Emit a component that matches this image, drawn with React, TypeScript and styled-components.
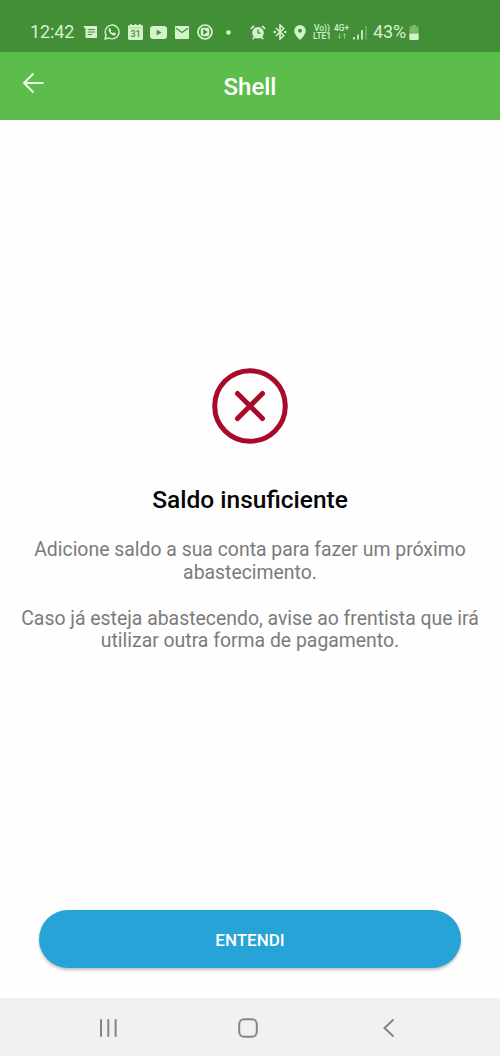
import React from "react";
import styled, { createGlobalStyle } from "styled-components";

const GlobalStyle = createGlobalStyle`
  * { box-sizing: border-box; }
  body { margin: 0; background: #fefefe; font-family: Roboto, "Liberation Sans", sans-serif; }
  svg { display: block; flex: none; }
`;

const tint = "#d3f3cb";
const statusGreen = "#438f38";

const Screen = styled.div`
  display: flex;
  flex-direction: column;
  width: 500px;
  height: 1056px;
  background: #fefefe;
`;

const StatusBar = styled.div`
  display: flex;
  align-items: center;
  height: 52px;
  padding: 12px 0 0 30px;
  background: ${statusGreen};
  color: ${tint};
`;

const StatusText = styled.span<{ $width: number; $gap?: number }>`
  width: ${(p) => p.$width}px;
  margin-left: ${(p) => p.$gap ?? 0}px;
  font-size: 18px;
  letter-spacing: -0.1px;
  line-height: 20px;
  white-space: nowrap;
`;

const StatusIcon = styled.svg.attrs({ fill: "none" })<{ $gap: number }>`
  margin-left: ${(p) => p.$gap}px;
`;

const NetworkLabel = styled.div<{ $width: number; $gap: number }>`
  display: flex;
  flex-direction: column;
  align-items: center;
  width: ${(p) => p.$width}px;
  margin-left: ${(p) => p.$gap}px;
  font-size: 8.4px;
  font-weight: 500;
  line-height: 8px;
  white-space: nowrap;
`;

const Header = styled.header`
  display: grid;
  grid-template-columns: 66px 1fr 66px;
  height: 68px;
  background: #5dbd4c;
  border-bottom: 1px solid #65b557;
`;

const BackButton = styled.button`
  display: flex;
  justify-content: center;
  padding: 20px 0 0;
  border: 0;
  background: none;
`;

const Title = styled.h1`
  margin: 0;
  padding-top: 21px;
  color: #fff;
  font-size: 24px;
  font-weight: 500;
  line-height: 28px;
  text-align: center;
`;

const Content = styled.main`
  display: flex;
  flex: 1;
  flex-direction: column;
  align-items: center;
  padding-top: 248px;
`;

const Heading = styled.h2`
  margin: 41px 0 24px;
  color: #050505;
  font-size: 24.5px;
  font-weight: 500;
  line-height: 30px;
`;

const Message = styled.p`
  margin: 0 0 23px;
  color: #7b7b7b;
  font-size: 19.4px;
  line-height: 22.8px;
  text-align: center;
  white-space: nowrap;
`;

const ActionButton = styled.button`
  width: 422px;
  height: 58px;
  margin: auto 0 30px;
  padding: 2px 0 0;
  border: 0;
  border-radius: 29px;
  background: #26a4d7;
  box-shadow: 0 2px 3px rgba(0, 0, 0, 0.25);
  color: #fff;
  font-family: inherit;
  font-size: 17px;
  font-weight: 500;
`;

const NavBar = styled.nav`
  display: flex;
  align-items: center;
  justify-content: space-between;
  height: 58px;
  padding: 2px 102px 0 98px;
  background: #f1f1f1;
`;

export default function App() {
  return (
    <Screen>
      <GlobalStyle />
      <StatusBar>
        <StatusText $width={44}>12:42</StatusText>
        <StatusIcon $gap={9} width="15" height="14" viewBox="0 0 15 14">
          <path d="M0 1H13A1 1 0 0 1 14 2V12A1 1 0 0 1 13 13H3.500A1 1 0 0 1 2.500 12V4Z" fill={tint} />
          <path d="M4.800 4.500H12M4.800 7H12M4.800 9.500H9" stroke={statusGreen} strokeWidth="1.200" />
        </StatusIcon>
        <StatusIcon $gap={6} width="16" height="16" viewBox="0 0 16 16">
          <path d="M1 15l1-3.900A6.900 6.900 0 1 1 4.800 14Z" stroke={tint} strokeWidth="1.400" strokeLinejoin="round" />
          <path d="M5.300 4.200c-1.500 1.200-.7 3.300 1.100 5.200 1.900 1.900 4.200 2.800 5.400 1.100.4-.7.2-1.100-.2-1.300L10 8.400c-.5-.2-.7.5-1.200.9C7.600 8.900 6.900 8.200 6.500 7.100c.5-.4.8-.7.6-1.200L6.400 4.300c-.2-.4-.7-.4-1.100-.1Z" fill={tint} />
        </StatusIcon>
        <StatusIcon $gap={8} width="15" height="16" viewBox="0 0 15 16">
          <path d="M1.500 1H2.500V0H4V1H6.800V0H8.300V1H11V0H12.500V1H13.500A1.500 1.500 0 0 1 15 2.500V14.500A1.500 1.500 0 0 1 13.500 16H1.500A1.500 1.500 0 0 1 0 14.500V2.500A1.500 1.500 0 0 1 1.500 1Z" fill={tint} />
          <path d="M1.500 4H13.500" stroke={statusGreen} strokeWidth=".7" opacity=".4" />
          <text x="7.500" y="13" textAnchor="middle" fontFamily="Roboto" fontSize="9" fontWeight="500" fill={statusGreen}>31</text>
        </StatusIcon>
        <StatusIcon $gap={7} width="17" height="13" viewBox="0 0 17 13">
          <rect width="17" height="13" rx="3" fill={tint} />
          <path d="M6.700 3.800L11.500 6.500L6.700 9.200Z" fill={statusGreen} />
        </StatusIcon>
        <StatusIcon $gap={8} width="14" height="13" viewBox="0 0 14 13">
          <rect width="14" height="13" rx="1" fill={tint} />
          <path d="M1 2.300L7 6.500L13 2.300" stroke={statusGreen} strokeWidth="1.200" />
        </StatusIcon>
        <StatusIcon $gap={8} width="16" height="16" viewBox="0 0 16 16">
          <circle cx="8" cy="8" r="7" stroke={tint} strokeWidth="1.700" />
          <rect x="3.700" y="3.700" width="8.600" height="8.600" rx="2" fill={tint} />
          <path d="M6.300 5L10.800 8L6.300 11Z" fill={statusGreen} />
        </StatusIcon>
        <StatusIcon $gap={13} width="5" height="5" viewBox="0 0 5 5">
          <circle cx="2.500" cy="2.500" r="2.300" fill={tint} />
        </StatusIcon>
        <StatusIcon $gap={19} width="16" height="15" viewBox="0 0 16 15">
          <circle cx="8" cy="7.800" r="5.800" fill={tint} />
          <path d="M.8 3.800L4 .9M15.200 3.800L12 .9M4.500 12L2.800 14.300M11.500 12L13.200 14.300" stroke={tint} strokeWidth="1.600" />
          <path d="M8 4.500V8.200H10.700" stroke={statusGreen} strokeWidth="1.300" />
        </StatusIcon>
        <StatusIcon $gap={7} width="14" height="16" viewBox="0 0 14 16">
          <path d="M3 4L10.700 11.500L7 15V1L10.700 4.500L3 12" stroke={tint} strokeWidth="1.600" />
          <path d="M.6 8H3M11 8H13.400" stroke={tint} strokeWidth="1.900" />
        </StatusIcon>
        <StatusIcon $gap={7} width="12" height="15" viewBox="0 0 12 15">
          <path fillRule="evenodd" d="M6 0A5.700 5.700 0 0 0 .3 5.700C.3 9 3.500 12.500 6 15C8.500 12.500 11.700 9 11.700 5.700A5.700 5.700 0 0 0 6 0ZM6 3.700A2 2 0 1 1 6 7.700A2 2 0 1 1 6 3.700Z" fill={tint} />
        </StatusIcon>
        <NetworkLabel $width={18} $gap={7}>
          <span>Vo))</span>
          <span>LTE1</span>
        </NetworkLabel>
        <NetworkLabel $width={15} $gap={3}>
          <span>4G+</span>
          <svg width="10" height="8" viewBox="0 0 10 8" fill="none" stroke={tint} opacity=".5">
            <path d="M2.500 1V6.500M.7 4.700L2.500 6.500L4.300 4.700M7.500 7V1.500M5.700 3.300L7.500 1.500L9.300 3.300" />
          </svg>
        </NetworkLabel>
        <StatusIcon $gap={4} width="14" height="15" viewBox="0 0 14 15">
          <path d="M1 12V14.500M5 9.500V14.500M9 5V14.500" stroke={tint} strokeWidth="1.700" />
          <path d="M13 1V14.500" stroke={tint} strokeWidth="1.300" opacity=".4" />
        </StatusIcon>
        <StatusText $width={33} $gap={6}>43%</StatusText>
        <StatusIcon $gap={3} width="10" height="15" viewBox="0 0 10 15">
          <path d="M3 0H7V1.500H9.500V8.500H.5V1.500H3Z" fill={tint} opacity=".4" />
          <path d="M.3 8.500H9.700V14A1 1 0 0 1 8.700 15H1.300A1 1 0 0 1 .3 14Z" fill={tint} />
        </StatusIcon>
      </StatusBar>
      <Header>
        <BackButton aria-label="Voltar">
          <svg width="22" height="22" viewBox="0 0 22 22" fill="none" stroke="#e8fbe3" strokeWidth="2">
            <path d="M11.500 1.500L2 11L11.500 20.500M2 11H21.500" />
          </svg>
        </BackButton>
        <Title>Shell</Title>
      </Header>
      <Content>
        <svg width="76" height="76" viewBox="0 0 76 76" fill="none" stroke="#a90a2b" strokeWidth="5">
          <circle cx="38" cy="38" r="35.300" />
          <path d="M25.500 25.500L50.500 50.500M50.500 25.500L25.500 50.500" strokeLinecap="round" />
        </svg>
        <Heading>Saldo insuficiente</Heading>
        <Message>
          Adicione saldo a sua conta para fazer um próximo
          <br />
          abastecimento.
        </Message>
        <Message>
          Caso já esteja abastecendo, avise ao frentista que irá
          <br />
          utilizar outra forma de pagamento.
        </Message>
        <ActionButton>ENTENDI</ActionButton>
      </Content>
      <NavBar>
        <svg width="20" height="20" viewBox="0 0 20 20" stroke="#858585" strokeWidth="2" strokeLinecap="round">
          <path d="M3 2V18M10.300 2V18M17.600 2V18" />
        </svg>
        <svg width="22" height="20" viewBox="0 0 22 20" fill="none" stroke="#858585" strokeWidth="2">
          <rect x="1.200" y="1.200" width="17.600" height="17.600" rx="5" />
        </svg>
        <svg width="18" height="20" viewBox="0 0 18 20" fill="none" stroke="#858585" strokeWidth="2">
          <path d="M13.500 1.500L4.500 10L13.500 18.500" />
        </svg>
      </NavBar>
    </Screen>
  );
}
